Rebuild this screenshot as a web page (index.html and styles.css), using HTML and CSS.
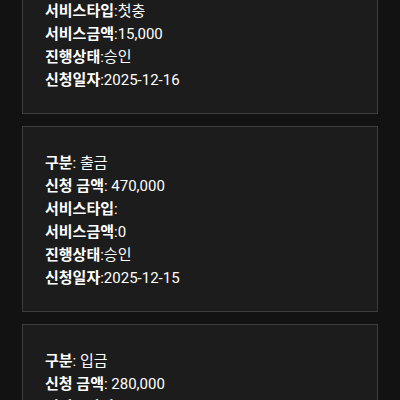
FILE: index.html
```html
<!DOCTYPE html>
<html lang="ko">
<head>
  <meta charset="UTF-8">
  <title>신청 내역</title>
  <link rel="stylesheet" href="styles.css">
</head>
<body>
  <div class="list">
    <!-- 신청 내역 카드 -->
    <div class="card">
      <p><b>구분</b>: 입금</p>
      <p><b>신청 금액</b>: 100,000</p>
      <p><b>서비스타입</b>:첫충</p>
      <p><b>서비스금액</b>:15,000</p>
      <p><b>진행상태</b>:승인</p>
      <p><b>신청일자</b>:2025-12-16</p>
    </div>

    <div class="card">
      <p><b>구분</b>: 출금</p>
      <p><b>신청 금액</b>: 470,000</p>
      <p><b>서비스타입</b>:</p>
      <p><b>서비스금액</b>:0</p>
      <p><b>진행상태</b>:승인</p>
      <p><b>신청일자</b>:2025-12-15</p>
    </div>

    <div class="card">
      <p><b>구분</b>: 입금</p>
      <p><b>신청 금액</b>: 280,000</p>
      <p><b>서비스타입</b>:</p>
      <p><b>서비스금액</b>:0</p>
      <p><b>진행상태</b>:승인</p>
      <p><b>신청일자</b>:2025-12-14</p>
    </div>
  </div>
</body>
</html>
```

FILE: styles.css
```css
body {
  margin: 0;
  background-color: #121212;
  color: #fff;
  font-family: Roboto, "Noto Sans CJK KR", sans-serif;
  font-size: 15px;
  overflow: hidden;
}

.list {
  display: flex;
  flex-direction: column;
  gap: 12px;
  margin: -72px 22px 0 22px;
}

.card {
  background-color: #1c1c1c;
  border: 1px solid #3d3d3d;
  padding: 25px 22px 21px 22px;
}

.card p {
  margin: 0;
  line-height: 23px;
}

.card b {
  font-weight: 700;
}
```
